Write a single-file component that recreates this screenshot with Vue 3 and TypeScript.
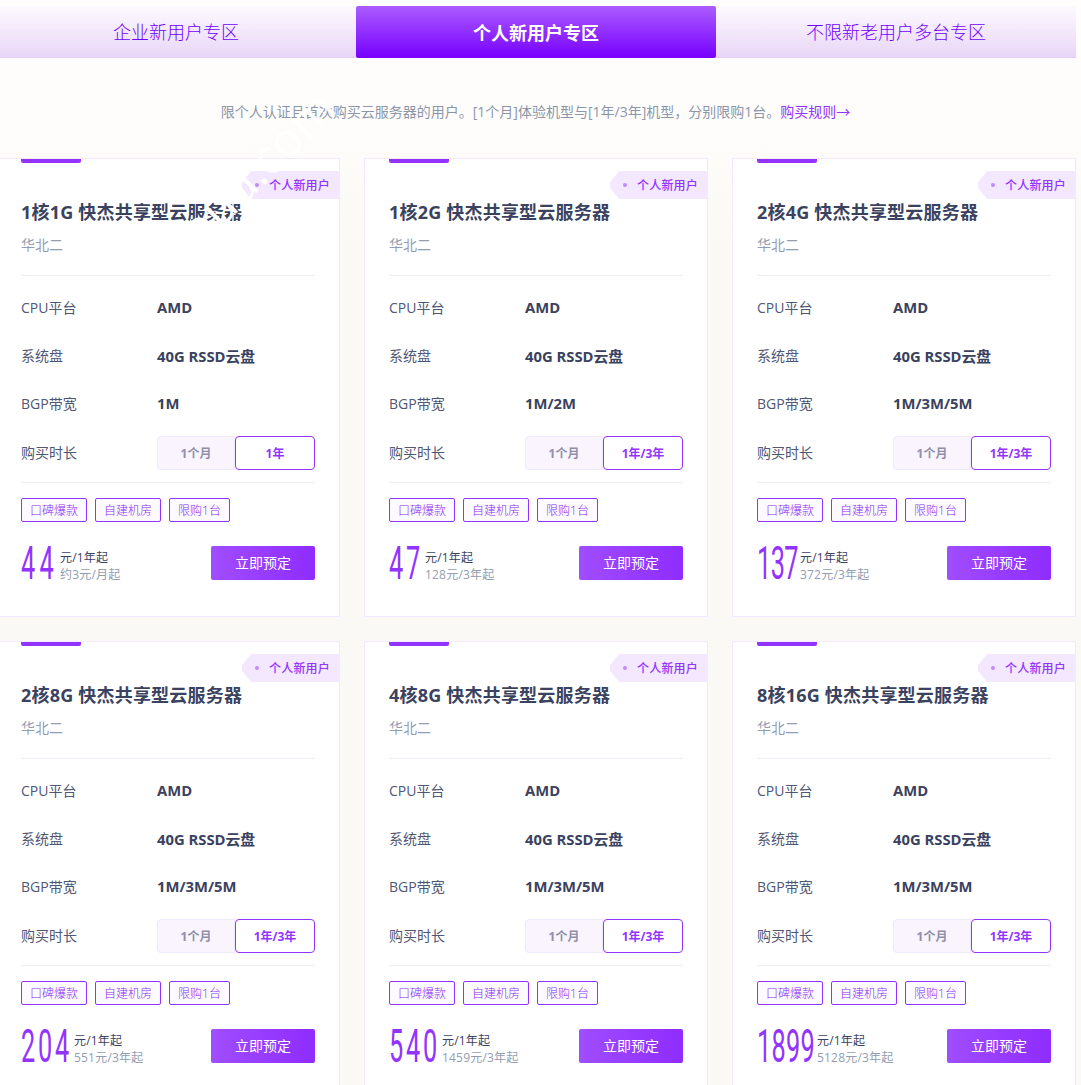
<script setup lang="ts">
interface Plan {
  title: string
  bw: string
  term: string
  price: string
  numW: number
  sub: string
}
const tabs = ['企业新用户专区', '个人新用户专区', '不限新老用户多台专区']
const tags = ['口碑爆款', '自建机房', '限购1台']
const plans: Plan[] = [
  { title: '1核1G 快杰共享型云服务器', bw: '1M', term: '1年', price: '44', numW: 37, sub: '约3元/月起' },
  { title: '1核2G 快杰共享型云服务器', bw: '1M/2M', term: '1年/3年', price: '47', numW: 34, sub: '128元/3年起' },
  { title: '2核4G 快杰共享型云服务器', bw: '1M/3M/5M', term: '1年/3年', price: '137', numW: 41, sub: '372元/3年起' },
  { title: '2核8G 快杰共享型云服务器', bw: '1M/3M/5M', term: '1年/3年', price: '204', numW: 51, sub: '551元/3年起' },
  { title: '4核8G 快杰共享型云服务器', bw: '1M/3M/5M', term: '1年/3年', price: '540', numW: 51, sub: '1459元/3年起' },
  { title: '8核16G 快杰共享型云服务器', bw: '1M/3M/5M', term: '1年/3年', price: '1899', numW: 58, sub: '5128元/3年起' },
]
const SCALE = 0.55
const ADV = 46 * 0.5615
function digitStyle(p: Plan) {
  const ls = (p.numW / p.price.length - ADV * SCALE) / SCALE
  return { letterSpacing: ls.toFixed(2) + 'px' }
}
</script>

<template>
  <div class="page">
    <nav class="tabs">
      <div v-for="(t, i) in tabs" :key="t" class="tab" :class="{ active: i === 1 }">{{ t }}</div>
    </nav>
    <p class="intro">限个人认证且首次购买云服务器的用户。[1个月]体验机型与[1年/3年]机型，分别限购1台。<a class="rule">购买规则→</a></p>
    <section class="grid">
      <article v-for="p in plans" :key="p.title" class="card">
        <i class="bar"></i>
        <div class="badge"><i class="dot"></i>个人新用户</div>
        <h3 class="title">{{ p.title }}</h3>
        <div class="region">华北二</div>
        <dl class="specs">
          <div class="row"><dt>CPU平台</dt><dd>AMD</dd></div>
          <div class="row"><dt>系统盘</dt><dd>40G RSSD云盘</dd></div>
          <div class="row"><dt>BGP带宽</dt><dd>{{ p.bw }}</dd></div>
        </dl>
        <div class="term">
          <span class="term-label">购买时长</span>
          <div class="seg">
            <span class="opt">1个月</span>
            <span class="opt on">{{ p.term }}</span>
          </div>
        </div>
        <div class="tags">
          <span v-for="t in tags" :key="t" class="tag">{{ t }}</span>
        </div>
        <div class="buy">
          <div class="num" :style="{ width: p.numW + 'px' }">
            <span class="digits" :style="digitStyle(p)">{{ p.price }}</span>
          </div>
          <div class="price-text">
            <div class="unit">元/1年起</div>
            <div class="sub">{{ p.sub }}</div>
          </div>
          <button class="btn">立即预定</button>
        </div>
      </article>
    </section>
    <div class="watermark">cloud.com</div>
  </div>
</template>

<style>
html, body { margin: 0; background: #fefdfb; overflow: hidden; }
</style>

<style scoped>
.page {
  position: relative;
  height: 1085px;
  overflow: hidden;
  padding-top: 6px;
  box-sizing: border-box;
  background: linear-gradient(180deg, #fffefc 0, #fefdfb 120px, #fbf9f5 240px, #fbf9f5 100%);
  font-family: "Open Sans", "Noto Sans CJK SC", sans-serif;
  color: #3a4260;
}
.tabs {
  display: grid;
  grid-template-columns: repeat(3, 360px);
  margin-left: -4px;
  width: 1080px;
  height: 52px;
}
.tab {
  display: flex;
  align-items: center;
  justify-content: center;
  padding-bottom: 1px;
  font-size: 18px;
  font-weight: 300;
  color: #7000ff;
  background: linear-gradient(180deg, #fdfafe 0%, #e9d6f7 100%);
  border-bottom: 1px solid #e2cdf3;
  box-sizing: border-box;
}
.tab.active {
  color: #fff;
  font-weight: 700;
  border-radius: 2px;
  border-bottom: 0;
  background: linear-gradient(180deg, #ab5cff 0%, #7700ff 100%);
}
.intro {
  margin: 0;
  height: 100px;
  line-height: 108px;
  font-size: 14px;
  text-align: center;
  color: #8c96a8;
  width: 1071px;
  white-space: nowrap;
}
.rule { color: #9333ff; }
.grid {
  display: grid;
  grid-template-columns: repeat(3, 344px);
  gap: 24px;
  margin-left: -4px;
  width: 1080px;
}
.card {
  position: relative;
  height: 459px;
  box-sizing: border-box;
  padding: 0 24px;
  background: #fff;
  border: 1px solid #f3e9fe;
}
.bar {
  position: absolute;
  left: 24px;
  top: 0;
  width: 60px;
  height: 4px;
  background: #9333ff;
  border-radius: 0 0 2px 2px;
}
.badge {
  position: absolute;
  right: 0;
  top: 12px;
  width: 97px;
  height: 28px;
  box-sizing: border-box;
  padding-left: 27px;
  line-height: 29px;
  font-size: 12px;
  font-weight: 500;
  letter-spacing: .2px;
  color: #9333ff;
  background: #f3e8ff;
  clip-path: polygon(9px 0, 100% 0, 100% 100%, 9px 100%, 0 60%, 0 40%);
}
.dot {
  position: absolute;
  left: 13px;
  top: 12px;
  width: 4px;
  height: 4px;
  border-radius: 50%;
  background: #c08cf5;
}
.title {
  margin: 0;
  padding-top: 41px;
  font-size: 18px;
  line-height: 24px;
  font-weight: 700;
  letter-spacing: .2px;
  color: #3a4260;
  white-space: nowrap;
}
.region {
  margin-top: 11px;
  font-size: 14px;
  line-height: 20px;
  color: #929db1;
  padding-bottom: 20px;
  border-bottom: 1px solid #f1edf8;
}
.specs { margin: 8px 0 0; }
.row {
  display: flex;
  align-items: center;
  height: 48px;
  font-size: 14px;
}
.row dt { width: 136px; color: #4f5774; position: relative; top: -1px; }
.row dd { margin: 0; font-weight: 700; font-size: 14.8px; color: #3a4260; position: relative; top: -1px; }
.term {
  display: flex;
  align-items: center;
  margin-top: 8px;
  padding-bottom: 12px;
  border-bottom: 1px solid #f1edf8;
}
.term-label { width: 136px; font-size: 14px; color: #4f5774; position: relative; top: -1px; }
.seg { display: flex; width: 158px; height: 34px; }
.opt {
  flex: none;
  width: 78px;
  display: flex;
  align-items: center;
  justify-content: center;
  box-sizing: border-box;
  font-size: 12px;
  font-weight: 700;
  color: #8f8fa8;
  background: #f9f4fe;
  border: 1px solid #f3e9fe;
  border-radius: 4px 0 0 4px;
}
.opt.on {
  width: 80px;
  color: #9333ff;
  background: #fff;
  border-color: #9333ff;
  border-radius: 4px;
}
.tags { display: flex; gap: 8px; margin-top: 15px; }
.tag {
  height: 24px;
  line-height: 23px;
  padding: 0 8px;
  box-sizing: border-box;
  font-size: 12px;
  font-weight: 300;
  color: #8a2cf5;
  background: #fdfaff;
  border: 1px solid #9333ff;
  border-radius: 2px;
}
.buy {
  display: flex;
  align-items: center;
  margin-top: 24px;
  height: 34px;
}
.num { height: 34px; flex: none; margin-right: 2px; }
.digits {
  display: block;
  width: 200px;
  font-family: Roboto, sans-serif;
  font-size: 46px;
  font-weight: 400;
  line-height: 34px;
  color: #9333ff;
  transform: scaleX(.55);
  transform-origin: left center;
  white-space: nowrap;
}
.price-text { font-size: 12px; line-height: 17px; white-space: nowrap; padding-top: 5px; letter-spacing: .2px; }
.unit { color: #3a4260; }
.sub { color: #929db1; }
.btn {
  margin-left: auto;
  width: 104px;
  height: 34px;
  padding: 0 0 2px;
  border: 0;
  border-radius: 2px;
  color: #fff;
  font: inherit;
  font-size: 14px;
  background: linear-gradient(90deg, #a04dff 0%, #8f2cff 100%);
}
.watermark {
  position: absolute;
  left: 128px;
  top: 150px;
  font-family: "Open Sans", sans-serif;
  font-size: 48px;
  line-height: 60px;
  color: #fff;
  transform: rotate(-45deg);
  pointer-events: none;
  white-space: nowrap;
}
</style>
